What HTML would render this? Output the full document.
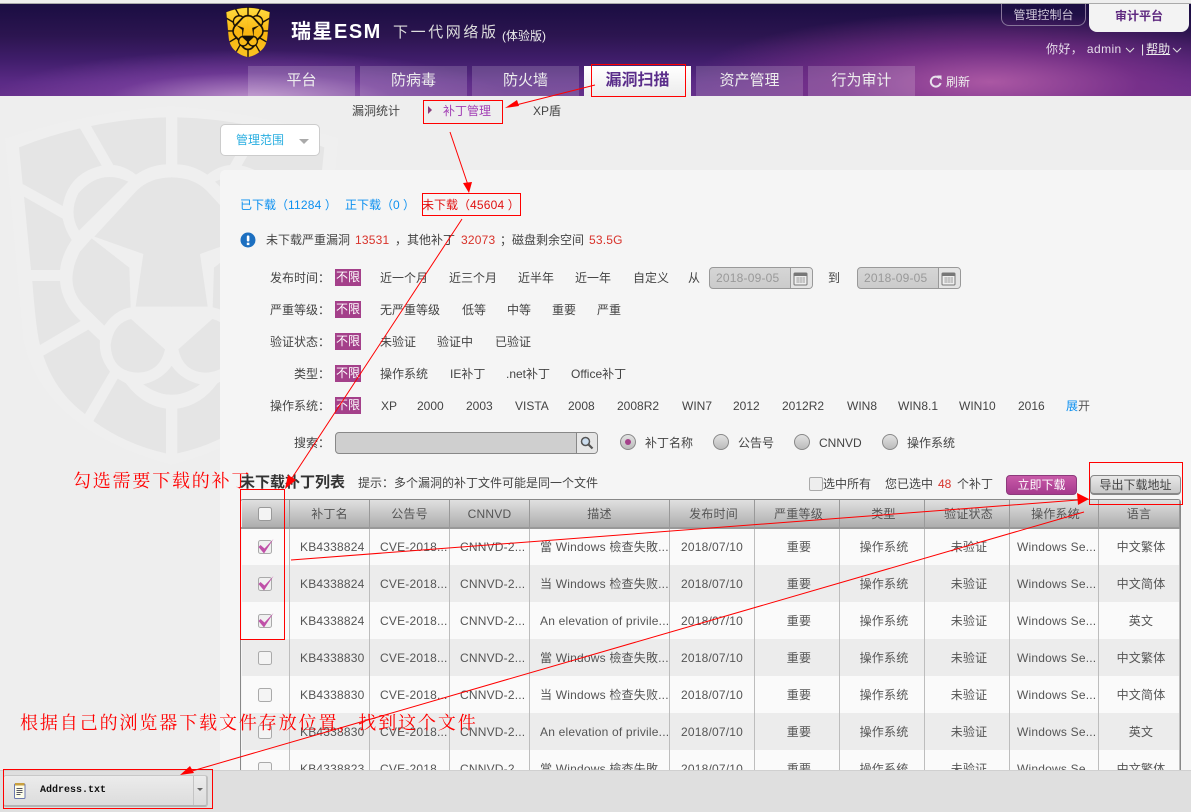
<!DOCTYPE html>
<html lang="zh-CN"><head><meta charset="utf-8"><title>瑞星ESM</title>
<style>
*{box-sizing:border-box}
html,body{margin:0;padding:0}
body{position:relative;width:1191px;height:812px;overflow:hidden;background:#eee;font:12px/16px "Liberation Sans","WenQuanYi Zen Hei","Noto Sans CJK SC",sans-serif;color:#444}
.a{position:absolute;white-space:nowrap}
.t{position:absolute;white-space:nowrap;height:16px;line-height:16px}
#hd{position:absolute;left:0;top:4px;width:1191px;height:92px;background:
radial-gradient(ellipse 260px 50px at 250px 96px,rgba(205,165,215,.85),rgba(130,70,165,.55) 55%,rgba(100,50,150,0) 100%),
radial-gradient(ellipse 300px 70px at 990px 78px,rgba(175,90,165,.95),rgba(130,50,140,.7) 50%,rgba(90,35,110,0) 100%),
linear-gradient(180deg,#1a0d42 0,#2c1550 35%,#3f1d6a 60%,#5a2a85 85%,#642f8a 100%)}
.tab{position:absolute;top:66px;height:30px;width:107px;background:rgba(255,255,255,.17);color:#eee;font-size:15px;line-height:30px;text-align:center}
.tag{position:absolute;left:335px;width:26px;height:17px;background:#a4408a;color:#fff;line-height:17px;text-align:center}
.lb{position:absolute;width:60px;left:270px;text-align:right;height:16px;line-height:16px;white-space:nowrap}
.date{position:absolute;top:267px;height:22px;width:104px;border:1px solid #999;border-radius:4px;background:linear-gradient(#d6d6d6,#cbcbcb);color:#999;line-height:20px;padding-left:6px;letter-spacing:.2px}
.date i{position:absolute;right:0;top:0;width:22px;height:20px;border-left:1px solid #999;background:#e4e4e4;border-radius:0 3px 3px 0}
.date svg{position:absolute;right:4px;top:3px}
.r{position:absolute;top:434px;width:16px;height:16px;border-radius:50%;border:1px solid #888;background:linear-gradient(#e2e2e2,#bbb)}
table{position:absolute;left:0;top:0;border-collapse:collapse;table-layout:fixed;width:939px}
td,th{padding:0;text-align:center;font-weight:400;white-space:nowrap;overflow:hidden;color:#555;letter-spacing:.2px}
th{height:28px;background:linear-gradient(#e0e0e0,#adadad);border-left:1px solid #eee;border-right:1px solid #999;border-bottom:2px solid #999}
th:nth-child(n+6):nth-child(-n+10){padding-left:3px}
td{height:37px;border-right:1px solid #bdbdbd}
td:nth-child(2),td:nth-child(3),td:nth-child(4){text-align:left;padding-left:10px}
td:nth-child(10){text-align:left;padding-left:7px}
td:nth-child(7),td:nth-child(8),td:nth-child(9),td:nth-child(11){padding-left:4px}
td:first-child,th:first-child{padding-right:1px}
tr:nth-child(even) td{background:#fafafa}
tr:nth-child(odd) td{background:#ececec}
td.d{text-align:left;padding-left:10px}
.c{display:block;margin:auto}
</style></head><body>
<div class="a" style="left:0;top:3px;width:1191px;height:1px;background:#aaa"></div>

<svg width="0" height="0" style="position:absolute"><defs>
<g id="half">
<path d="M57 142Q150 105 240 85L305 197Q205 220 188 318L68 252Z"/>
<path d="M273 78Q380 55 498 52V193Q450 195 408 224Q375 198 340 195Z"/>
<path d="M72 290L188 356Q195 390 215 420Q185 465 180 510H93Z"/>
<path d="M97 543H180Q185 610 242 663L120 735Q108 690 97 543Z"/>
<path d="M130 767L265 689L300 722Q295 770 330 815L255 942Q165 875 130 767Z"/>
<path d="M353 836L378 850Q425 915 498 926V1060Q380 1035 280 963Z"/>
<path d="M385 245L237 392Q205 340 235 280Q300 205 385 245Z"/>
<path d="M516 232Q450 232 410 272L283 410L430 462L407 620H516Z"/>
<path d="M275 415L388 503L392 622Q345 630 313 677L250 615Q190 550 240 455Z"/>
<path d="M393 657L495 748Q480 815 415 818Q335 815 332 735Q340 670 393 657Z"/>
<path d="M515 798Q545 840 597 853Q515 915 430 853Q485 840 515 798Z"/>
</g>
<linearGradient id="gold" gradientUnits="userSpaceOnUse" x1="0" y1="50" x2="0" y2="1060"><stop offset="0" stop-color="#ffdc40"/><stop offset=".5" stop-color="#f9b510"/><stop offset="1" stop-color="#fac422"/></linearGradient>
</defs></svg>

<!-- watermark -->
<svg class="a" style="left:0;top:100px" width="345" height="400" viewBox="0 0 1035 1200">
<path d="M15 115Q260 35 515 18Q770 35 1015 115L960 720Q900 990 515 1095Q130 990 70 720Z" fill="#efefef"/>
<g fill="#e5e5e5"><use href="#half"/><use href="#half" transform="translate(1030 0) scale(-1 1)"/></g>
</svg>

<div id="hd"></div>
<!-- logo -->
<svg class="a" style="left:224px;top:6px" width="48" height="52" viewBox="0 0 48 52">
<path d="M2 6Q13 2 24 1Q35 2 46 6L43 33Q40 46 24 51Q8 46 5 33Z" fill="#151008"/>
<g transform="translate(-.3 -.6) scale(.0472 .0486)" fill="url(#gold)" stroke="#f9b510" stroke-width="5"><use href="#half"/><use href="#half" transform="translate(1030 0) scale(-1 1)"/></g>
</svg>
<div class="t" style="left:291px;top:20px;height:24px;line-height:24px;font-size:20px;font-weight:700;color:#fff;letter-spacing:1.5px">瑞星ESM</div>
<div class="t" style="left:393px;top:22px;height:22px;line-height:22px;font-size:15px;color:#ddd;letter-spacing:2.6px">下一代网络版</div>
<div class="t" style="left:502px;top:28px;color:#eee">(体验版)</div>

<div class="a" style="left:1001px;top:4px;width:85px;height:22px;border:1px solid #87759a;border-top:0;border-radius:0 0 8px 8px;color:#cfc6d8;text-align:center;line-height:23px">管理控制台</div>
<div class="a" style="left:1089px;top:4px;width:100px;height:28px;background:#f3f3f3;border-radius:0 0 8px 8px;color:#5f2a80;font-weight:700;text-align:center;line-height:24px">审计平台</div>
<div class="t" style="left:1046px;top:41px;color:#e6dcea;letter-spacing:.4px">你好， admin</div>
<svg class="a" style="left:1125px;top:47px" width="10" height="6"><path d="M1 1l4 4 4-4" fill="none" stroke="#ddd"/></svg>
<div class="t" style="left:1141px;top:41px;color:#eee">|<span style="text-decoration:underline;margin-left:2px">帮助</span></div>
<svg class="a" style="left:1172px;top:47px" width="10" height="6"><path d="M1 1l4 4 4-4" fill="none" stroke="#ddd"/></svg>

<div class="tab" style="left:248px">平台</div>
<div class="tab" style="left:360px">防病毒</div>
<div class="tab" style="left:472px">防火墙</div>
<div class="tab" style="left:584px;background:linear-gradient(#fff,#ececec);color:#5a2d8a;font-weight:700;font-size:16px">漏洞扫描</div>
<div class="tab" style="left:696px">资产管理</div>
<div class="tab" style="left:808px">行为审计</div>
<svg class="a" style="left:928px;top:74px" width="15" height="15" viewBox="0 0 15 15"><path d="M11.5 4.2A5 5 0 1 0 12.6 9" fill="none" stroke="#e8e0ec" stroke-width="2"/><path d="M9 1.5h4.5v4.5z" fill="#e8e0ec"/></svg>
<div class="t" style="left:946px;top:74px;color:#eee">刷新</div>

<!-- subnav -->
<div class="t" style="left:352px;top:103px">漏洞统计</div>
<div class="a" style="left:428px;top:106px;border-left:4px solid #8a3a7a;border-top:4px solid transparent;border-bottom:4px solid transparent"></div>
<div class="t" style="left:443px;top:103px;color:#a23fb5">补丁管理</div>
<div class="t" style="left:533px;top:103px">XP盾</div>
<div class="a" style="left:220px;top:124px;width:100px;height:32px;background:#fff;border:1px solid #ccc;border-radius:5px;color:#29aee0;line-height:30px;padding-left:15px">管理范围</div>
<div class="a" style="left:299px;top:139px;border-top:5px solid #aaa;border-left:5px solid transparent;border-right:5px solid transparent"></div>

<!-- panel -->
<div class="a" style="left:220px;top:170px;width:971px;height:600px;background:#f5f5f5;border-radius:5px 0 0 0"></div>

<div class="t" style="left:240px;top:197px;color:#0c90f0">已下载（<span style="letter-spacing:.2px">11284</span> ）</div>
<div class="t" style="left:345px;top:197px;color:#0c90f0">正下载（<span>0</span> ）</div>
<div class="t" style="left:422px;top:197px;color:#e01010">未下载（<span style="letter-spacing:.2px">45604</span> ）</div>

<svg class="a" style="left:240px;top:232px" width="16" height="16"><circle cx="8" cy="8" r="7.5" fill="#1c6fc0"/><rect x="6.8" y="3.5" width="2.6" height="6" rx="1" fill="#fff"/><rect x="6.8" y="10.7" width="2.6" height="2.4" fill="#fff"/></svg>
<div class="t" style="left:266px;top:232px">未下载严重漏洞</div>
<div class="t" style="left:355px;top:232px;color:#d8322a;letter-spacing:.2px">13531</div>
<div class="t" style="left:395px;top:232px">，其他补丁</div>
<div class="t" style="left:461px;top:232px;color:#d8322a;letter-spacing:.2px">32073</div>
<div class="t" style="left:500px;top:232px">；磁盘剩余空间</div>
<div class="t" style="left:589px;top:232px;color:#d8322a;letter-spacing:.2px">53.5G</div>

<div class="lb" style="top:270px">发布时间：</div><div class="tag" style="top:269px">不限</div>
<div class="t" style="left:380px;top:270px">近一个月</div><div class="t" style="left:449px;top:270px">近三个月</div><div class="t" style="left:518px;top:270px">近半年</div><div class="t" style="left:575px;top:270px">近一年</div><div class="t" style="left:633px;top:270px">自定义</div><div class="t" style="left:688px;top:270px">从</div>
<div class="date" style="left:709px">2018-09-05<i></i><svg width="15" height="15" viewBox="0 0 15 15"><rect x="1" y="2" width="13" height="12" rx="1" fill="#eee" stroke="#777"/><rect x="1" y="2" width="13" height="3" fill="#777"/><path d="M3 7h9M3 9h9M3 11h9M5 6v6M8 6v6M11 6v6" stroke="#aaa" stroke-width=".8"/></svg></div>
<div class="t" style="left:828px;top:270px">到</div>
<div class="date" style="left:857px">2018-09-05<i></i><svg width="15" height="15" viewBox="0 0 15 15"><rect x="1" y="2" width="13" height="12" rx="1" fill="#eee" stroke="#777"/><rect x="1" y="2" width="13" height="3" fill="#777"/><path d="M3 7h9M3 9h9M3 11h9M5 6v6M8 6v6M11 6v6" stroke="#aaa" stroke-width=".8"/></svg></div>

<div class="lb" style="top:302px">严重等级：</div><div class="tag" style="top:301px">不限</div>
<div class="t" style="left:380px;top:302px">无严重等级</div><div class="t" style="left:462px;top:302px">低等</div><div class="t" style="left:507px;top:302px">中等</div><div class="t" style="left:552px;top:302px">重要</div><div class="t" style="left:597px;top:302px">严重</div>

<div class="lb" style="top:334px">验证状态：</div><div class="tag" style="top:333px">不限</div>
<div class="t" style="left:380px;top:334px">未验证</div><div class="t" style="left:437px;top:334px">验证中</div><div class="t" style="left:495px;top:334px">已验证</div>

<div class="lb" style="top:366px">类型：</div><div class="tag" style="top:365px">不限</div>
<div class="t" style="left:380px;top:366px">操作系统</div><div class="t" style="left:450px;top:366px">IE补丁</div><div class="t" style="left:506px;top:366px">.net补丁</div><div class="t" style="left:571px;top:366px">Office补丁</div>

<div class="lb" style="top:398px">操作系统：</div><div class="tag" style="top:397px">不限</div>
<div class="t" style="left:381px;top:398px">XP</div><div class="t" style="left:417px;top:398px">2000</div><div class="t" style="left:466px;top:398px">2003</div><div class="t" style="left:515px;top:398px">VISTA</div><div class="t" style="left:568px;top:398px">2008</div><div class="t" style="left:617px;top:398px">2008R2</div><div class="t" style="left:682px;top:398px">WIN7</div><div class="t" style="left:733px;top:398px">2012</div><div class="t" style="left:782px;top:398px">2012R2</div><div class="t" style="left:847px;top:398px">WIN8</div><div class="t" style="left:898px;top:398px">WIN8.1</div><div class="t" style="left:959px;top:398px">WIN10</div><div class="t" style="left:1018px;top:398px">2016</div><div class="t" style="left:1066px;top:398px;color:#0c90f0">展<span style="color:#555">开</span></div>

<div class="lb" style="top:435px">搜索：</div>
<div class="a" style="left:335px;top:432px;width:263px;height:22px;background:#cfcfcf;border:1px solid #888;border-radius:4px"></div>
<div class="a" style="left:576px;top:433px;width:21px;height:20px;background:#e6e6e6;border-left:1px solid #888;border-radius:0 3px 3px 0"></div>
<svg class="a" style="left:579px;top:435px" width="16" height="16"><circle cx="6.5" cy="6.5" r="4" fill="#cde" stroke="#555" stroke-width="1.5"/><path d="M9.5 9.5l4 4" stroke="#555" stroke-width="2.2"/></svg>
<div class="r" style="left:620px"><i style="position:absolute;left:4px;top:4px;width:6px;height:6px;border-radius:50%;background:#a4408a"></i></div>
<div class="t" style="left:645px;top:435px">补丁名称</div>
<div class="r" style="left:713px"></div><div class="t" style="left:738px;top:435px">公告号</div>
<div class="r" style="left:794px"></div><div class="t" style="left:819px;top:435px">CNNVD</div>
<div class="r" style="left:882px"></div><div class="t" style="left:907px;top:435px">操作系统</div>

<div class="t" style="left:240px;top:475px;font-size:15px;font-weight:700;color:#333">未下载补丁列表</div>
<div class="t" style="left:358px;top:475px">提示：多个漏洞的补丁文件可能是同一个文件</div>
<div class="a" style="left:809px;top:477px;width:14px;height:14px;background:#eee;border:1px solid #aaa;border-radius:2px"></div>
<div class="t" style="left:823px;top:476px">选中所有</div>
<div class="t" style="left:885px;top:476px">您已选中</div>
<div class="t" style="left:938px;top:476px;color:#d8322a">48</div>
<div class="t" style="left:957px;top:476px">个补丁</div>
<div class="a" style="left:1006px;top:475px;width:71px;height:20px;background:linear-gradient(#c85aa8,#a63a8e);border:1px solid #8d3a7c;border-radius:4px;color:#fff;text-align:center;line-height:18px">立即下载</div>
<div class="a" style="left:1090px;top:475px;width:91px;height:20px;background:linear-gradient(#e8e8e8,#c8c8c8);border:1px solid #888;border-bottom:2px solid #888;border-radius:4px;text-align:center;line-height:18px">导出下载地址</div>

<!-- table -->
<div class="a" style="left:240px;top:499px;width:941px;height:271px;overflow:hidden;border:1px solid #888;border-bottom:0;border-width:1px 1px 0 1px;border-radius:3px 3px 0 0">
<table>
<colgroup><col style="width:48px"><col style="width:80px"><col style="width:80px"><col style="width:80px"><col style="width:140px"><col style="width:85px"><col style="width:85px"><col style="width:85px"><col style="width:85px"><col style="width:89px"><col style="width:81px"></colgroup>
<tr><th><svg class="c" width="14" height="14"><rect x=".5" y=".5" width="13" height="13" rx="2" fill="#f4f4f4" stroke="#999"/></svg></th><th>补丁名</th><th>公告号</th><th>CNNVD</th><th>描述</th><th>发布时间</th><th>严重等级</th><th>类型</th><th>验证状态</th><th>操作系统</th><th>语言</th></tr>
<tr><td><svg class="c" width="18" height="18"><rect x="2.5" y="2.5" width="13" height="13" rx="2" fill="#f0f0f0" stroke="#aaa"/><path d="M2.5 9L8 15.5L17.5 1L8.5 10.5L4.5 7Z" fill="#c050a8"/></svg></td><td>KB4338824</td><td>CVE-2018...</td><td>CNNVD-2...</td><td class="d">當 Windows 檢查失敗...</td><td>2018/07/10</td><td>重要</td><td>操作系统</td><td>未验证</td><td>Windows Se...</td><td>中文繁体</td></tr>
<tr><td><svg class="c" width="18" height="18"><rect x="2.5" y="2.5" width="13" height="13" rx="2" fill="#f0f0f0" stroke="#aaa"/><path d="M2.5 9L8 15.5L17.5 1L8.5 10.5L4.5 7Z" fill="#c050a8"/></svg></td><td>KB4338824</td><td>CVE-2018...</td><td>CNNVD-2...</td><td class="d">当 Windows 检查失败...</td><td>2018/07/10</td><td>重要</td><td>操作系统</td><td>未验证</td><td>Windows Se...</td><td>中文简体</td></tr>
<tr><td><svg class="c" width="18" height="18"><rect x="2.5" y="2.5" width="13" height="13" rx="2" fill="#f0f0f0" stroke="#aaa"/><path d="M2.5 9L8 15.5L17.5 1L8.5 10.5L4.5 7Z" fill="#c050a8"/></svg></td><td>KB4338824</td><td>CVE-2018...</td><td>CNNVD-2...</td><td class="d">An elevation of privile...</td><td>2018/07/10</td><td>重要</td><td>操作系统</td><td>未验证</td><td>Windows Se...</td><td>英文</td></tr>
<tr><td><svg class="c" width="14" height="14"><rect x=".5" y=".5" width="13" height="13" rx="2" fill="#f4f4f4" stroke="#aaa"/></svg></td><td>KB4338830</td><td>CVE-2018...</td><td>CNNVD-2...</td><td class="d">當 Windows 檢查失敗...</td><td>2018/07/10</td><td>重要</td><td>操作系统</td><td>未验证</td><td>Windows Se...</td><td>中文繁体</td></tr>
<tr><td><svg class="c" width="14" height="14"><rect x=".5" y=".5" width="13" height="13" rx="2" fill="#f4f4f4" stroke="#aaa"/></svg></td><td>KB4338830</td><td>CVE-2018...</td><td>CNNVD-2...</td><td class="d">当 Windows 检查失败...</td><td>2018/07/10</td><td>重要</td><td>操作系统</td><td>未验证</td><td>Windows Se...</td><td>中文简体</td></tr>
<tr><td><svg class="c" width="14" height="14"><rect x=".5" y=".5" width="13" height="13" rx="2" fill="#f4f4f4" stroke="#aaa"/></svg></td><td>KB4338830</td><td>CVE-2018...</td><td>CNNVD-2...</td><td class="d">An elevation of privile...</td><td>2018/07/10</td><td>重要</td><td>操作系统</td><td>未验证</td><td>Windows Se...</td><td>英文</td></tr>
<tr><td><svg class="c" width="14" height="14"><rect x=".5" y=".5" width="13" height="13" rx="2" fill="#f4f4f4" stroke="#aaa"/></svg></td><td>KB4338823</td><td>CVE-2018...</td><td>CNNVD-2...</td><td class="d">當 Windows 檢查失敗...</td><td>2018/07/10</td><td>重要</td><td>操作系统</td><td>未验证</td><td>Windows Se...</td><td>中文繁体</td></tr>
</table></div>

<!-- bottom bar -->
<div class="a" style="left:0;top:770px;width:1191px;height:42px;background:#dfdfdf;border-top:1px solid #d0d0d0"></div>
<div class="a" style="left:3px;top:775px;width:205px;height:32px;background:linear-gradient(#ececec,#dcdcdc);border:1px solid #c8c8c8;border-bottom:2px solid #b4b4b4;border-right:2px solid #c0c0c0;border-radius:3px"></div>
<div class="a" style="left:193px;top:776px;width:1px;height:29px;background:#c4c4c4"></div>
<div class="a" style="left:197px;top:788px;border-top:3px solid #666;border-left:3px solid transparent;border-right:3px solid transparent"></div>
<svg class="a" style="left:13px;top:782px" width="14" height="18"><rect x="1.5" y="2" width="10.5" height="14.5" rx="1" fill="#fdfde8" stroke="#6a78b0"/><rect x="2" y="1" width="9.5" height="2.5" fill="#c9a040"/><path d="M3.5 6.5h6M3.5 8.5h6M3.5 10.5h6M3.5 12.5h4" stroke="#556"/></svg>
<div class="t" style="left:40px;top:783px;font:bold 10px/16px 'Liberation Mono',monospace;color:#111">Address.txt</div>

<!-- annotations -->
<div class="t" style="left:73px;top:469px;height:24px;line-height:24px;font-size:18px;letter-spacing:1.8px;color:#f00;font-family:'Liberation Serif','Noto Serif CJK SC',serif">勾选需要下载的补丁</div>
<div class="t" style="left:20px;top:711px;height:24px;line-height:24px;font-size:18px;letter-spacing:1.9px;color:#f00;font-family:'Liberation Serif','Noto Serif CJK SC',serif">根据自己的浏览器下载文件存放位置，找到这个文件</div>

<svg class="a" style="left:0;top:0;pointer-events:none" width="1191" height="812" fill="none" stroke="#f00">
<rect x="591.5" y="64.5" width="94" height="32"/>
<rect x="423.5" y="100.5" width="79" height="23"/>
<rect x="422.5" y="193.5" width="98" height="22"/>
<rect x="240.5" y="489.5" width="44" height="150"/>
<rect x="1089.5" y="462.5" width="93" height="42"/>
<rect x="3.5" y="769.5" width="209" height="39"/>
<path d="M595 85L512 106M450 132L468 185M462 219L290 481M291 560L1078 500M1084 512L192 771"/>
<g fill="#f00" stroke="none">
<path d="M505 108L517 100L519 106Z"/>
<path d="M469 193L463 183L472 182Z"/>
<path d="M285 489L288 475L296 480Z"/>
<path d="M1089 499L1077 493L1078 505Z"/>
<path d="M180 775L190 766L194 773Z"/>
</g>
</svg>
</body></html>
